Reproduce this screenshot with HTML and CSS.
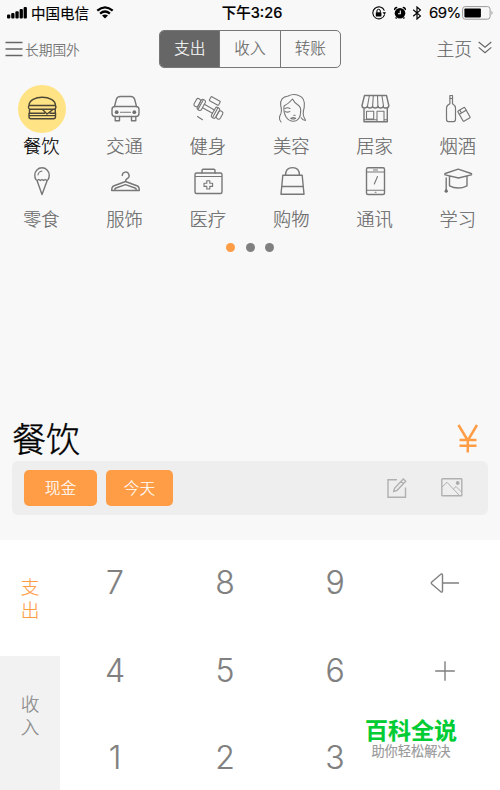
FILE: index.html
```html
<!DOCTYPE html>
<html lang="zh-CN">
<head>
<meta charset="utf-8">
<title>记账</title>
<link rel="stylesheet" href="styles.css">
</head>
<body>
<div class="app">
  <header class="status">
    <div class="status-left">
      <svg class="signal" width="20" height="12" viewBox="0 0 20 12"><rect x="0" y="7.5" width="3.300" height="4" rx="1"/><rect x="4.2" y="6" width="3.300" height="5.5" rx="1"/><rect x="8.4" y="4.3" width="3.300" height="7.2" rx="1"/><rect x="12.6" y="2" width="3.300" height="9.5" rx="1"/><rect x="16.600" y="0" width="3.300" height="11.5" rx="1"/></svg>
      <span class="carrier">中国电信</span>
      <svg class="wifi" width="18" height="13" viewBox="0 0 18 13"><path d="M1.3 4.7Q9-2 16.7 4.7M4.1 7.6Q9 3.3 13.9 7.6" fill="none" stroke="#000" stroke-width="2.3"/><path d="M6 9.6Q9 7.2 12 9.6L9 12.6Z"/></svg>
    </div>
    <div class="clock">下午3:26</div>
    <div class="status-right">
      <svg width="14" height="14" viewBox="0 0 14 14"><path d="M12.6 8.6A6 6 0 1 1 12.4 4.6" fill="none" stroke="#000" stroke-width="1.1"/><path d="M10.5 6.3h3.5l-1.5 2.5z"/><rect x="3.8" y="6.2" width="5.6" height="4.2" rx=".5"/><path d="M4.9 6.5V5a1.7 1.7 0 0 1 3.4 0v1.5" fill="none" stroke="#000"/></svg>
      <svg class="alarm" width="14" height="14" viewBox="0 0 14 14"><circle cx="7" cy="7.300" r="5.300"/><path d="M1.700 4a2 2 0 0 1 2.500-2.300M12.300 4a2 2 0 0 0-2.500-2.300M3.500 11.500l-.8 1M10.500 11.500l.8 1" fill="none" stroke="#000" stroke-width="1.5"/><path d="M7.3 4.500v3.200H5" fill="none" stroke="#fff" stroke-width="1.1"/></svg>
      <svg class="bluetooth" width="10" height="14" viewBox="0 0 10 14"><path d="M1.2 3.7l7.2 6.2L5 13V1l3.4 3.1L1.2 10.3" fill="none" stroke="#000" stroke-width="1.2"/></svg>
      <span class="percent">69%</span>
      <svg class="battery" width="32" height="14" viewBox="0 0 32 14"><rect x=".6" y=".6" width="27.5" height="12.6" rx="2.6" fill="none" stroke="#999"/><rect x="2.4" y="2.4" width="16.5" height="9" rx=".8"/><path d="M29.5 4.8q2.2 2.1 0 4.3z" fill="#999"/></svg>
    </div>
  </header>

  <nav class="nav">
    <div class="book">
      <svg width="18" height="16" viewBox="0 0 18 16"><path d="M.5 1.5h17M.5 8h17M.5 14.5h17" stroke="#666" stroke-width="1.3"/></svg>
      <span>长期国外</span>
    </div>
    <div class="segments">
      <span class="segment segment-on">支出</span>
      <span class="segment">收入</span>
      <span class="segment">转账</span>
    </div>
    <div class="home">
      <span>主页</span>
      <svg width="14" height="13" viewBox="0 0 14 13"><path d="M.7 1L7 6.2 13.3 1M.7 6.4L7 11.8l6.3-5.4" fill="none" stroke="#666" stroke-width="1.2"/></svg>
    </div>
  </nav>

  <main class="categories">
    <div class="category category-on">
      <svg class="icon" viewBox="0 0 48 48"><path d="M11 20.500C11 9.500 37.500 9.500 37.500 20.500ZM11 20.500q-1.500 3 1 3.700h24.500q2.200-1 1-3.700M11.500 24.500v3.500M37.300 24.500v3.500M24.500 24.500l4.500 4.500 6-4.500M11 28.200h15.500M32 28.200h5.700M11 28.200v3.500q0 2 2 2h22.500q2 0 2-2v-3.500M11.500 30.600h26"/></svg>
      <span class="label">餐饮</span>
    </div>
    <div class="category">
      <svg class="icon" viewBox="0 0 48 48"><rect x="11" y="21.500" width="27" height="10" rx="3"/><path d="M13.500 21.500l1.800-7q.8-3 4-3h10.400q3.200 0 4 3l1.800 7M14.200 31.500v4.300h4.300v-4.300M30.500 31.500v4.300h4.300v-4.300"/><path class="thin" d="M19.500 27.300h10"/><circle class="fill" cx="15.700" cy="27.200" r="1.900"/><circle class="fill" cx="33.300" cy="27.200" r="1.900"/></svg>
      <span class="label">交通</span>
    </div>
    <div class="category">
      <svg class="icon thin" viewBox="0 0 48 48"><g transform="rotate(29 24.300 23.700)"><rect x="9.500" y="19.500" width="4.500" height="8.500" rx="1.800"/><rect x="14" y="18" width="4.700" height="11.500" rx="1.800"/><path d="M18.700 21.800h11.500M18.700 25.600h11.500M15.600 18.500v10.500M32.300 18.500v10.500"/><rect x="30.200" y="18" width="4.700" height="11.500" rx="1.800"/><rect x="34.900" y="19.500" width="4.500" height="8.500" rx="1.800"/><rect x="21" y="11.500" width="10.500" height="4.500" rx=".6"/></g><path d="M13.500 31.500l5 3.200"/></svg>
      <span class="label">健身</span>
    </div>
    <div class="category">
      <svg class="icon thin" viewBox="0 0 48 48"><path d="M13 37q-3-3.500-.3-8 1.500-3 0-8.500-1-8.500 7.500-9.500 5-2.700 10.500-.5 7 2.500 5.500 12-2 7 .2 10.500 1 1.500 1 2.500-3-.5-4.200-2.800M16 21q5-2.500 8.500-7 2 4 5.500 6 3.500 2.500 2.500 7M16 21c-1 9 3.500 15.200 9.300 15.200 4.700 0 7.500-4 7.400-10"/><path d="M17 23.500q2.500-1.500 5 0M17 26.500q2.500 1.300 4.800 0M25.700 30.300h1.500M22.700 33.200l2.500-.7 2.500.7q-2.500 1.500-5 0Z"/></svg>
      <span class="label">美容</span>
    </div>
    <div class="category">
      <svg class="icon" viewBox="0 0 48 48"><path d="M13.500 10.500h22l2.300 10q0 2.500-2.800 2.500t-2.700-1.800q-.2 1.800-2.700 1.800t-2.700-1.800Q26.700 23 24.200 23t-2.600-1.800Q21.400 23 19 23t-2.700-1.800Q16 23 13.500 23t-2.500-2.500ZM13 23v13.800h23.300V23"/><path class="thin" d="M18.300 11l-1.800 10M22.300 11l-.7 10M26.500 11l.4 10M31 11l1.500 10M15.500 26.300h7.200V34h-7.200zM26 36.500V26.300h7v10.200M13 34.800h13M33 34.800h3"/></svg>
      <span class="label">居家</span>
    </div>
    <div class="category">
      <svg class="icon bottle" viewBox="0 0 48 48"><path d="M15.900 10.500h2.600v8.300q3 2 3 4.200v11q0 2.700-2 2.700h-5q-2 0-2-2.700V23q0-2.500 3.400-4.200ZM15.700 13.500h3"/><g transform="rotate(-30 29.700 29.500)"><rect x="26" y="23.500" width="8" height="12" rx="1"/><path d="M26 27h8M28.500 24v3"/></g></svg>
      <span class="label">烟酒</span>
    </div>
    <div class="category">
      <svg class="icon" viewBox="0 0 48 48"><path d="M17.800 21.500q-1-1.500-1-4.500a7.200 7.200 0 0 1 14.400 0q0 3-1 4.500l-1.500 1-1.600-1-1.600 1-1.500-1-1.600 1-1.500-1-1.600 1ZM19 22.500L24 36.500l5.200-14"/><path class="thin" d="M20 17q.5-3.500 4-4"/></svg>
      <span class="label">零食</span>
    </div>
    <div class="category">
      <svg class="icon" viewBox="0 0 48 48"><path d="M21.300 17.500a3.400 3.400 0 1 1 5 3q-1.800.8-1.800 3M24.500 23.500l12 4.500q1.800.8 1.800 4.500H10.700q0-3.700 1.800-4.500ZM13.800 32q-.3-1.500 1.200-2l9.500-3.300L34 30q1.500.5 1.200 2"/></svg>
      <span class="label">服饰</span>
    </div>
    <div class="category">
      <svg class="icon" viewBox="0 0 48 48"><rect x="11" y="15" width="27" height="20.500" rx="1.500"/><path d="M18 15v-2.500q0-1.200 1.200-1.200h10.600q1.200 0 1.200 1.200V15"/><path class="thin" d="M11.500 18.500h26M22.800 22.700h3v2.500h2.800v3.200h-2.800V31h-3v-2.600H20v-3.200h2.800z"/></svg>
      <span class="label">医疗</span>
    </div>
    <div class="category">
      <svg class="icon" viewBox="0 0 48 48"><path d="M14.800 17.300h19.400l1.800 19H13ZM17.500 17.300q0-7.700 7-7.700t7 7.700M14 28.500h21"/></svg>
      <span class="label">购物</span>
    </div>
    <div class="category">
      <svg class="icon" viewBox="0 0 48 48"><rect x="15.500" y="9.700" width="18" height="26.800" rx="1.500"/><path class="thin" d="M15.500 14h18M15.500 32.200h18M22.500 12h4M24.200 34.300h.8M26.500 18.500l-3.200 7.500"/></svg>
      <span class="label">通讯</span>
    </div>
    <div class="category">
      <svg class="icon" viewBox="0 0 48 48"><path d="M11.200 15.500l13-4.300 13 4.300q.8.700 0 1.400L24.500 20l-13.300-3.100q-.8-.7 0-1.400ZM15.500 18.500v9.300q8.500 4.500 17.500 0v-9.300M12.200 20v10"/><path class="fill" d="M12.200 29.500l1.900 4q-1.900 2.500-3.800 0z"/></svg>
      <span class="label">学习</span>
    </div>
  </main>

  <div class="pager"><i class="dot dot-on"></i><i class="dot"></i><i class="dot"></i></div>

  <section class="entry">
    <div class="amount"><span>餐饮</span><svg class="yen" width="22" height="29" viewBox="0 0 22 29"><path d="M1.500 1l9.300 15.500L20 1M10.800 16v12.500M2.500 16h17M2.500 21.700h17" fill="none" stroke="#ff9d47" stroke-width="2.500"/></svg></div>
    <div class="options">
      <span class="chip">现金</span>
      <span class="chip chip-date">今天</span>
      <svg class="edit" width="20" height="20" viewBox="0 0 20 20"><path d="M10 1.700H1v17.600h17.500V9.500M6.700 13.500l1-3.500 8.600-9 2.400 2.300-8.600 9ZM14 3.200l2.300 2.200"/></svg>
      <svg class="photo" width="22" height="19" viewBox="0 0 22 19"><rect x=".8" y=".8" width="20" height="17" rx=".6"/><path class="slim" d="M1 9l5-4.700L18.500 17.500M12.300 11l2.700-2.500 5.500 5.500"/><circle cx="16.700" cy="5" r="1.200"/></svg>
    </div>
  </section>

  <section class="keyboard">
    <div class="sides">
      <div class="side side-on">支<br>出</div>
      <div class="side">收<br>入</div>
    </div>
    <div class="keys">
      <span class="key">7</span><span class="key">8</span><span class="key">9</span>
      <span class="key"><svg width="30" height="22" viewBox="0 0 30 22"><path d="M1.800 10q-1 1 0 2l9 7.800q1.700 1 1.700-.8V3q0-1.800-1.700-.8ZM12.500 11H29"/></svg></span>
      <span class="key">4</span><span class="key">5</span><span class="key">6</span>
      <span class="key"><svg width="22" height="22" viewBox="0 0 22 22"><path d="M1.200 11h19.600M11 1.200v19.600"/></svg></span>
      <span class="key">1</span><span class="key">2</span><span class="key">3</span><span class="key"></span>
    </div>
    <div class="watermark"><div class="brand">百科全说</div><div class="slogan">助你轻松解决</div></div>
  </section>
</div>
</body>
</html>
```
FILE: styles.css
```css
* { box-sizing: border-box; }
body {
  margin: 0;
  background: #f8f8f8;
  color: #666;
  font-family: "Noto Sans CJK SC", sans-serif;
  font-weight: 300;
  -webkit-text-stroke: 0.15px currentColor;
}
svg { display: block; flex: none; }
.app { width: 500px; height: 790px; overflow: hidden; display: flex; flex-direction: column; }

.status { height: 25px; flex: none; display: grid; grid-template-columns: 160px 184px 156px; align-items: center; color: #000; font-weight: 400; }
.status-left, .status-right { display: flex; align-items: center; }
.status-left { padding-left: 7px; }
.carrier { font-size: 14.5px; line-height: 24px; margin-left: 4px; }
.wifi { margin-left: 7px; }
.clock { text-align: center; font-size: 14.5px; font-weight: 500; font-family: Inter, "Noto Sans CJK SC", sans-serif; line-height: 24px; }
.status-right { padding-left: 28px; }
.alarm { margin-left: 7px; }
.bluetooth { margin-left: 5px; }
.percent { font: 400 15px/24px Inter, sans-serif; width: 30px; margin-left: 7px; letter-spacing: -0.6px; }
.battery { margin-left: 3px; }

.nav { height: 47px; flex: none; display: grid; grid-template-columns: 159px 182px 159px; align-items: center; }
.book { display: flex; align-items: center; padding-left: 5px; gap: 2px; font-size: 13.7px; }
.segments { display: flex; height: 38px; border: 1px solid #777; border-radius: 5px; overflow: hidden; }
.segment { flex: 1; display: flex; align-items: center; justify-content: center; font-size: 15.7px; padding-bottom: 2px; }
.segment + .segment { border-left: 1px solid #777; }
.segment-on { background: #666; color: #fff; }
.home { display: flex; align-items: center; justify-content: flex-end; gap: 6px; padding: 0 8px 2px 0; font-size: 17.8px; }

.categories { display: grid; grid-template-columns: repeat(6, 1fr); grid-auto-rows: 73px; padding-top: 13px; }
.category { display: flex; flex-direction: column; align-items: center; }
.icon { width: 48px; height: 48px; fill: none; stroke: #777; stroke-width: 1.4; stroke-linejoin: round; stroke-linecap: round; border-radius: 50%; }
.thin { stroke-width: 1.1; }
.bottle { stroke-width: 1.2; }
.icon .fill { fill: #707070; stroke: none; }
.category-on .icon { background: #ffe384; stroke: #4c4636; }
.label { font-size: 18.3px; line-height: 25px; margin-left: -1px; }
.category-on .label { color: #000; }

.pager { display: flex; justify-content: center; gap: 10.5px; padding-top: 12px; }
.dot { width: 9px; height: 9px; border-radius: 50%; background: #808080; }
.dot-on { background: #ff9d47; }

.entry { margin-top: auto; padding: 0 12px 25px; }
.amount { display: flex; justify-content: space-between; align-items: center; height: 44px; padding-right: 9px; color: #000; font-size: 34px; line-height: 42px; -webkit-text-stroke-width: 0.4px; }
.amount span { padding-bottom: 2px; }
.options { height: 54px; display: flex; align-items: center; padding: 0 25px 0 12px; border-radius: 6px; background: #eee; }
.chip { width: 73px; height: 36px; border-radius: 5px; background: #ff9d47; color: #fff; font-size: 15.7px; line-height: 35px; text-align: center; }
.chip-date { width: 67px; margin-left: 9px; }
.edit, .photo { fill: none; stroke: #b0b0b0; stroke-width: 1.4; }
.edit { margin-left: auto; margin-right: 34px; }
.slim { stroke-width: 1; }
.photo circle { fill: #999; }

.keyboard { position: relative; display: flex; flex: none; height: 250.5px; background: #fff; }
.sides { width: 60.5px; font-size: 18.7px; line-height: 23px; text-align: center; }
.side { height: 134px; display: flex; align-items: center; justify-content: center; background: #f2f2f2; color: #888; padding-bottom: 19px; }
.side-on { height: 116.5px; background: #fff; color: #ff9d47; padding: 0 0 2px; }
.keys { flex: 1; display: grid; grid-template-columns: repeat(4, 110px); grid-auto-rows: 87.5px; }
.key { display: flex; align-items: center; justify-content: center; font: 300 32px/1 Inter, sans-serif; color: #808080; }
.key svg { fill: none; stroke: #808080; stroke-width: 1.4; }
.watermark { position: absolute; left: 365px; top: 176px; width: 92px; text-align: center; white-space: nowrap; }
.brand { color: #00cc33; font-size: 23px; line-height: 26px; font-weight: 700; }
.slogan { color: #999; font-size: 13.2px; line-height: 17px; font-weight: 400; }
```
